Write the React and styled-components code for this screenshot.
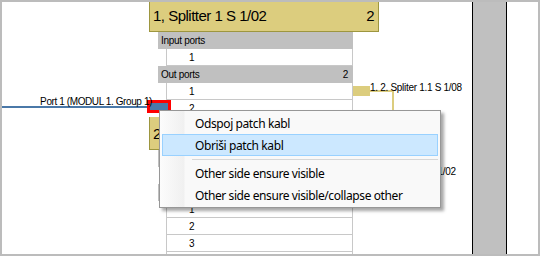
import React from "react";
import styled, { createGlobalStyle } from "styled-components";

const GlobalStyle = createGlobalStyle`
  html, body { margin: 0; padding: 0; background: #fff; }
  body {
    width: 540px;
    height: 256px;
    overflow: hidden;
    font-family: "Liberation Sans", Arial, sans-serif;
  }
`;

const GOLD = "#dccd7e";
const OLIVE = "#9d963f";
const GRID = "#c8c8c8";

const Frame = styled.div`
  position: relative;
  display: flex;
  width: 540px;
  height: 256px;
  box-sizing: border-box;
  border: 2px solid #bcbcbc;
  background: #fff;
  overflow: hidden;
`;

const Canvas = styled.div`
  position: relative;
  flex: 0 0 470px;
  overflow: hidden;
`;

const Divider = styled.div`
  flex: 0 0 35px;
  box-sizing: border-box;
  border-left: 1px solid #000;
  border-right: 1px solid #000;
  background: #c0c0c0;
`;

const Rest = styled.div`
  flex: 1;
`;

/* diagram nodes */
const Node = styled.div`
  position: absolute;
  left: ${(p) => p.$x}px;
  top: ${(p) => p.$y}px;
  width: 230px;
`;

const NodeHeader = styled.div`
  display: flex;
  align-items: center;
  justify-content: space-between;
  height: 33px;
  box-sizing: border-box;
  padding: 1px 4px 0 3px;
  background: ${GOLD};
  border: 1px solid ${OLIVE};
  border-top: none;
  font-size: 15px;
  letter-spacing: -0.5px;
  color: #000;
`;

const PortTable = styled.div`
  margin-left: 9px;
  width: 195px;
  font-size: 10px;
  letter-spacing: -0.3px;
`;

const Section = styled.div`
  display: flex;
  align-items: center;
  justify-content: space-between;
  height: 17px;
  padding: 0 5px 0 3px;
  background: #c0c0c0;
`;

const PortRow = styled.div`
  display: flex;
  align-items: center;
  height: 17px;
  box-sizing: border-box;
  margin-left: 8px;
  padding-left: 22px;
  border-left: 1px solid ${GRID};
  border-right: 1px solid ${GRID};
  border-bottom: ${(p) => (p.$last ? "none" : `1px solid ${GRID}`)};
  background: #fff;
`;

/* incoming patch cable from the left */
const PortLink = styled.div`
  position: absolute;
  left: 0;
  top: 95px;
  display: flex;
  align-items: flex-start;
`;

const Lead = styled.div`
  display: flex;
  flex-direction: column;
  align-items: flex-end;
  width: 145px;
`;

const LeadLabel = styled.div`
  height: 9px;
  margin-right: -5px;
  font-size: 10px;
  line-height: 10px;
  letter-spacing: -0.4px;
  white-space: nowrap;
  position: relative;
  z-index: 1;
`;

const LeadLine = styled.div`
  align-self: stretch;
  height: 2px;
  background: #4a78a8;
`;

const Endpoint = styled.div`
  width: 24px;
  height: 13px;
  margin-top: 3px;
  box-sizing: border-box;
  border: 3px solid #ff0000;
  background: #4a78a8;
`;

/* outgoing link to the next splitter */
const OutLink = styled.div`
  position: absolute;
  left: 351px;
  top: 79px;
  display: flex;
  align-items: flex-start;
`;

const Stub = styled.div`
  width: 17px;
  height: 10px;
  margin-top: 5px;
  background: ${GOLD};
`;

const Branch = styled.div`
  position: relative;
  width: 24px;
  height: 84px;
  margin-top: 9px;
  box-sizing: border-box;
  border-top: 2px solid ${GOLD};
  border-right: 2px solid ${GOLD};
`;

const LinkLabels = styled.div`
  position: absolute;
  left: 0;
  top: -10px;
  display: flex;
  flex-direction: column;
  gap: 72px;
`;

const LinkLabel = styled.div`
  margin-left: ${(p) => p.$indent || 0}px;
  font-size: 10px;
  line-height: 12px;
  letter-spacing: -0.3px;
  white-space: nowrap;
  color: #000;
`;

/* context menu */
const Menu = styled.div`
  position: absolute;
  left: 157px;
  top: 108px;
  width: 282px;
  box-sizing: border-box;
  padding: 1px 2px;
  border: 1px solid #979797;
  background: linear-gradient(to right, #fcfcfc 0, #f0f0f0 24px, #f9f9f9 25px);
  box-shadow: 3px 3px 3px rgba(0, 0, 0, 0.35);
  font-family: "Noto Sans", "Open Sans", sans-serif;
  font-size: 12px;
  letter-spacing: -0.4px;
  color: #000;
`;

const MenuItem = styled.div`
  display: flex;
  align-items: center;
  height: 22px;
  box-sizing: border-box;
  padding-left: 32px;
  border: 1px solid ${(p) => (p.$active ? "#99d1ff" : "transparent")};
  background: ${(p) => (p.$active ? "#cce8ff" : "transparent")};
`;

const Separator = styled.div`
  height: 6px;
  display: flex;
  align-items: center;
  padding-left: 30px;
  &::after {
    content: "";
    flex: 1;
    height: 1px;
    background: #d7d7d7;
  }
`;

function Splitter({ x, y, title, outCount, outRows }) {
  return (
    <Node $x={x} $y={y}>
      <NodeHeader>
        <span>{title}</span>
        <span>{outCount}</span>
      </NodeHeader>
      <PortTable>
        <Section>Input ports</Section>
        <PortRow>1</PortRow>
        <Section>
          <span>Out ports</span>
          <span>{outCount}</span>
        </Section>
        {outRows.map((n, i) => (
          <PortRow key={i} $last={i === outRows.length - 1 && outRows.length === 2}>
            {n}
          </PortRow>
        ))}
      </PortTable>
    </Node>
  );
}

export default function App() {
  return (
    <>
      <GlobalStyle />
      <Frame>
        <Canvas>
          <Splitter x={147} y={-3} title="1, Splitter 1 S 1/02" outCount={2} outRows={[1, 2]} />
          <Splitter x={147} y={115} title="2, Splitter 1 S 1/08" outCount={8} outRows={[1, 2, 3, ""]} />

          <PortLink>
            <Lead>
              <LeadLabel>Port 1 (MODUL 1. Group 1)</LeadLabel>
              <LeadLine />
            </Lead>
            <Endpoint />
          </PortLink>

          <OutLink>
            <Stub />
            <Branch>
              <LinkLabels>
                <LinkLabel>1. 2. Spliter 1.1 S 1/08</LinkLabel>
                <LinkLabel $indent={-6}>1. 3. Spliter 1.2 S 1/02</LinkLabel>
              </LinkLabels>
            </Branch>
          </OutLink>
        </Canvas>
        <Divider />
        <Rest />

        <Menu>
          <MenuItem>Odspoj patch kabl</MenuItem>
          <MenuItem $active>Obriši patch kabl</MenuItem>
          <Separator />
          <MenuItem>Other side ensure visible</MenuItem>
          <MenuItem>Other side ensure visible/collapse other</MenuItem>
        </Menu>
      </Frame>
    </>
  );
}
